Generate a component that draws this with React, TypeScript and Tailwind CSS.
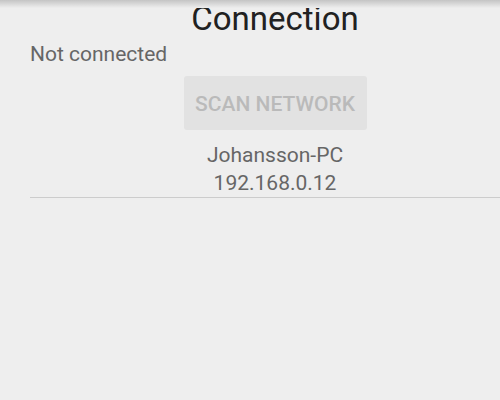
export default function App() {
  return (
    <div className="relative h-[400px] w-[500px] overflow-hidden bg-[#eeeeee] font-['Roboto',sans-serif]">
      <div className="pointer-events-none absolute inset-x-0 top-0 h-[8px] bg-gradient-to-b from-[#c4c4c4] to-[#eeeeee]" />
      <div className="ml-[30px] flex w-[490px] flex-col">
        <h1 className="text-center text-[33px] leading-[38px] text-[#212121]">Connection</h1>
        <p className="text-[21px] leading-[32px] text-[#666666]">Not connected</p>
        <div className="mt-[6px] flex justify-center">
          <button
            disabled
            className="h-[54px] w-[183px] rounded-[3px] bg-[#e2e2e2] pt-[3px] text-[21px] font-medium text-[#bababa]"
          >
            SCAN NETWORK
          </button>
        </div>
        <div className="mt-[11px] flex flex-col items-center text-[21px] leading-[28px] text-[#666666]">
          <span>Johansson-PC</span>
          <span>192.168.0.12</span>
        </div>
        <div className="h-px bg-[#cccccc]" />
      </div>
    </div>
  );
}
